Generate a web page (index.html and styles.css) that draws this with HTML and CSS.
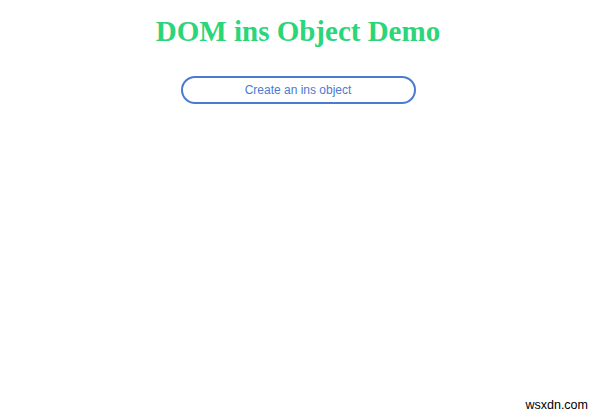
FILE: index.html
```html
<!DOCTYPE html>
<html>
<head>
<meta charset="utf-8">
<link rel="stylesheet" href="styles.css">
</head>
<body>
<main class="page">
  <h1 class="title">DOM ins Object Demo</h1>
  <button class="create-btn">Create an ins object</button>
</main>
<div class="watermark">wsxdn.com</div>
</body>
</html>
```
FILE: styles.css
```css
html, body {
  margin: 0;
  padding: 0;
  background: #ffffff;
  width: 600px;
  height: 417px;
  overflow: hidden;
}
body {
  position: relative;
}
.page {
  display: flex;
  flex-direction: column;
  align-items: center;
  padding-top: 15px;
  padding-right: 4px;
}
.title {
  margin: 0;
  font-family: "Liberation Serif", "Times New Roman", serif;
  font-weight: bold;
  font-size: 29px;
  line-height: 33px;
  color: #2bd67a;
}
.create-btn {
  margin-top: 28px;
  width: 235px;
  height: 28px;
  border: 2px solid #4a7bd1;
  border-radius: 14px;
  background: #ffffff;
  color: #4a7bd1;
  font-family: "Liberation Sans", Arial, sans-serif;
  font-size: 12px;
  padding: 0;
}
.watermark {
  position: absolute;
  right: 12px;
  bottom: 5px;
  font-family: "Liberation Sans", Arial, sans-serif;
  font-size: 12.5px;
  color: #000000;
}
```
